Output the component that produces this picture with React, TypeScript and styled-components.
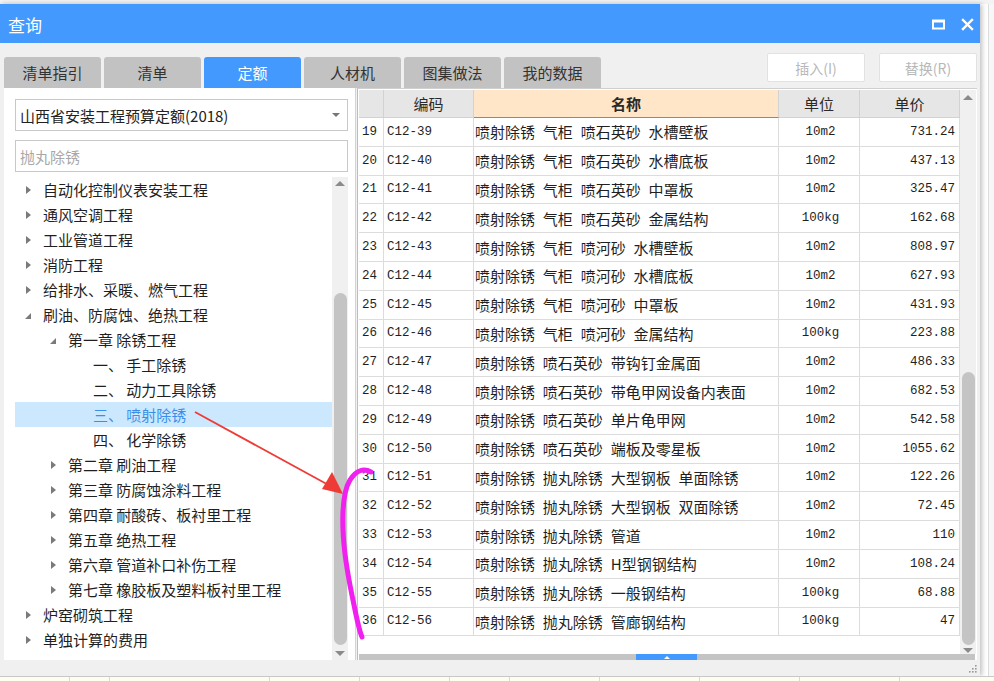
import React from 'react';
import styled, { createGlobalStyle } from 'styled-components';

const GlobalStyle = createGlobalStyle`
  html, body {
    margin: 0;
    padding: 0;
    background: #ffffff;
  }
  * {
    box-sizing: border-box;
  }
`;

const UI_FONT = `"Noto Sans CJK SC", "Noto Sans", sans-serif`;
const MONO_FONT = `"Liberation Mono", "Noto Sans CJK SC", monospace`;
const BLUE = '#4499ff';

const s = {
  Page: styled.div`
    position: relative;
    width: 994px;
    height: 681px;
    overflow: hidden;
    display: flex;
    flex-direction: column;
    background: #ffffff;
    font-family: ${UI_FONT};
  `,
  TopStrip: styled.div`
    height: 4px;
    background: #f3f3f3;
  `,
  Middle: styled.div`
    height: 672px;
    display: flex;
  `,
  RightStrip: styled.div`
    flex: 1;
    margin-left: 8px;
    background: #f7f7f7;
    border-left: 1px solid #dddddd;
  `,
  BottomStrip: styled.div`
    flex: 1;
    background: #fffdf0;
    border-top: 1px solid #c8c8c8;
    display: flex;
  `,
  BottomCell: styled.div<{ $w: number }>`
    width: ${(p) => p.$w}px;
    border-right: 1px solid #d8d8d8;
  `,
  Dialog: styled.div`
    width: 980px;
    height: 672px;
    display: flex;
    flex-direction: column;
    background: #f0f0f0;
    box-shadow: 2px 0 5px rgba(0, 0, 0, 0.25);
  `,
  TitleBar: styled.div`
    height: 39px;
    background: ${BLUE};
    display: flex;
    align-items: center;
    justify-content: space-between;
    padding: 0 6px 0 8px;
  `,
  Title: styled.div`
    color: #ffffff;
    font-size: 17px;
    line-height: 1;
    margin-top: 2px;
  `,
  TitleControls: styled.div`
    display: flex;
    align-items: center;
    gap: 16px;
    padding-top: 2px;
  `,
  TabRow: styled.div`
    height: 45px;
    display: flex;
    align-items: flex-end;
    padding: 0 3px 0 4px;
  `,
  Tabs: styled.div`
    display: flex;
    gap: 3px;
  `,
  Tab: styled.div<{ $active?: boolean }>`
    width: 97px;
    height: 31px;
    border-radius: 3px 3px 0 0;
    background: ${(p) => (p.$active ? BLUE : '#c2c2c2')};
    color: ${(p) => (p.$active ? '#ffffff' : '#333333')};
    font-size: 15px;
    display: flex;
    align-items: center;
    justify-content: center;
  `,
  Actions: styled.div`
    margin-left: auto;
    align-self: flex-start;
    margin-top: 10px;
    display: flex;
    gap: 14px;
  `,
  ActionBtn: styled.div`
    width: 98px;
    height: 29px;
    background: #ffffff;
    border: 1px solid #e2e2e2;
    border-radius: 2px;
    color: #b8b8b8;
    font-size: 14px;
    display: flex;
    align-items: center;
    justify-content: center;
  `,
  Content: styled.div`
    height: 572px;
    display: flex;
    gap: 1px;
    padding-left: 4px;
  `,
  LeftPanel: styled.div`
    width: 352px;
    background: #ffffff;
    border-right: 1px solid #d4d4d4;
    display: flex;
    flex-direction: column;
    padding: 11px 7px 0 11px;
  `,
  Select: styled.div`
    height: 32px;
    border: 1px solid #c8c8c8;
    display: flex;
    align-items: center;
    justify-content: space-between;
    padding: 0 7px 0 4px;
    font-size: 15px;
    color: #222222;
  `,
  SelectCaret: styled.span`
    width: 0;
    height: 0;
    border-left: 4px solid transparent;
    border-right: 4px solid transparent;
    border-top: 4px solid #777777;
  `,
  Search: styled.input`
    margin-top: 9px;
    height: 32px;
    border: 1px solid #c8c8c8;
    outline: none;
    padding: 0 4px;
    font-family: ${UI_FONT};
    font-size: 15px;
    color: #222222;
    &::placeholder {
      color: #a8a8a8;
    }
  `,
  TreeArea: styled.div`
    margin-top: 5px;
    flex: 1;
    display: flex;
    min-height: 0;
  `,
  TreeList: styled.div`
    flex: 1;
    display: flex;
    flex-direction: column;
  `,
  TreeRow: styled.div<{ $level: number; $selected?: boolean }>`
    height: 25px;
    flex-shrink: 0;
    display: flex;
    align-items: center;
    padding-left: ${(p) => 10 + p.$level * 25}px;
    background: ${(p) => (p.$selected ? '#cce8ff' : 'transparent')};
    color: ${(p) => (p.$selected ? '#3b8fe8' : '#1f1f1f')};
    font-size: 15px;
    white-space: pre;
  `,
  Toggle: styled.span`
    width: 18px;
    height: 25px;
    display: flex;
    align-items: center;
  `,
  Collapsed: styled.span`
    width: 0;
    height: 0;
    border-top: 4px solid transparent;
    border-bottom: 4px solid transparent;
    border-left: 5px solid #7a7a7a;
    margin-left: 1px;
  `,
  Expanded: styled.span`
    width: 0;
    height: 0;
    border-left: 6px solid transparent;
    border-bottom: 6px solid #7a7a7a;
    margin-top: 2px;
  `,
  VBar: styled.div<{ $w: number }>`
    width: ${(p) => p.$w}px;
    background: #f0f0f0;
    display: flex;
    flex-direction: column;
    align-items: center;
  `,
  ArrowBox: styled.div<{ $h: number }>`
    height: ${(p) => p.$h}px;
    flex-shrink: 0;
    display: flex;
    align-items: center;
    justify-content: center;
  `,
  ArrowUp: styled.span`
    width: 0;
    height: 0;
    border-left: 5px solid transparent;
    border-right: 5px solid transparent;
    border-bottom: 5px solid #8a8a8a;
  `,
  ArrowDown: styled.span`
    width: 0;
    height: 0;
    border-left: 5px solid transparent;
    border-right: 5px solid transparent;
    border-top: 5px solid #8a8a8a;
  `,
  Thumb: styled.div<{ $top: number; $h: number }>`
    width: 13px;
    margin-top: ${(p) => p.$top}px;
    height: ${(p) => p.$h}px;
    border-radius: 7px;
    background: #c4c4c4;
    flex-shrink: 0;
  `,
  Filler: styled.div`
    flex: 1;
  `,
  TablePanel: styled.div`
    width: 620px;
    background: #ffffff;
    border-top: 1px solid #cfcfcf;
    border-left: 1px solid #bdbdbd;
    padding: 1px 0 0 1px;
    display: flex;
    flex-direction: column;
  `,
  TableBody: styled.div`
    flex: 1;
    display: flex;
    min-height: 0;
  `,
  Grid: styled.div`
    width: 601px;
    display: flex;
    flex-direction: column;
  `,
  Row: styled.div<{ $h: number }>`
    display: grid;
    grid-template-columns: 25px 90px 305px 81px 100px;
    height: ${(p) => p.$h}px;
    flex-shrink: 0;
  `,
  HeadCell: styled.div<{ $name?: boolean }>`
    background: ${(p) => (p.$name ? '#ffe6c9' : '#e6e6e6')};
    border-right: 1px solid #d2d2d2;
    border-bottom: 1px solid ${(p) => (p.$name ? BLUE : '#d2d2d2')};
    display: flex;
    align-items: center;
    justify-content: center;
    font-size: 15px;
    font-weight: ${(p) => (p.$name ? 700 : 400)};
    color: #2a2a2a;
  `,
  Cell: styled.div<{ $align?: 'left' | 'center' | 'right'; $cjk?: boolean }>`
    border-right: 1px solid #dcdcdc;
    border-bottom: 1px solid #dcdcdc;
    display: flex;
    align-items: center;
    justify-content: ${(p) =>
      p.$align === 'center' ? 'center' : p.$align === 'right' ? 'flex-end' : 'flex-start'};
    padding: ${(p) => (p.$align === 'right' ? '0 4px 0 0' : p.$cjk ? '0 0 0 1px' : '0 0 0 3px')};
    font-family: ${(p) => (p.$cjk ? UI_FONT : MONO_FONT)};
    font-size: ${(p) => (p.$cjk ? '15px' : '12.5px')};
    word-spacing: ${(p) => (p.$cjk ? '4.5px' : '0')};
    color: #1f1f1f;
    white-space: pre;
    overflow: hidden;
  `,
  HBar: styled.div`
    height: 6px;
    margin-right: 2px;
    background: #c4c4c4;
    display: flex;
  `,
  HThumb: styled.div`
    margin-left: 277px;
    width: 61px;
    height: 6px;
    background: ${BLUE};
    display: flex;
    justify-content: center;
    align-items: center;
  `,
  HThumbArrow: styled.span`
    width: 0;
    height: 0;
    border-left: 3px solid transparent;
    border-right: 3px solid transparent;
    border-bottom: 3px solid #ffffff;
  `,
  Footer: styled.div`
    height: 16px;
    display: flex;
    justify-content: flex-end;
    align-items: flex-end;
    padding: 0 2px 2px 0;
  `,
  Overlay: styled.svg`
    position: absolute;
    left: 0;
    top: 0;
    pointer-events: none;
  `,
};

type TreeNode = { label: string; level: number; state: 'open' | 'closed' | 'leaf'; selected?: boolean };

const treeNodes: TreeNode[] = [
  { label: '自动化控制仪表安装工程', level: 0, state: 'closed' },
  { label: '通风空调工程', level: 0, state: 'closed' },
  { label: '工业管道工程', level: 0, state: 'closed' },
  { label: '消防工程', level: 0, state: 'closed' },
  { label: '给排水、采暖、燃气工程', level: 0, state: 'closed' },
  { label: '刷油、防腐蚀、绝热工程', level: 0, state: 'open' },
  { label: '第一章 除锈工程', level: 1, state: 'open' },
  { label: '一、 手工除锈', level: 2, state: 'leaf' },
  { label: '二、 动力工具除锈', level: 2, state: 'leaf' },
  { label: '三、 喷射除锈', level: 2, state: 'leaf', selected: true },
  { label: '四、 化学除锈', level: 2, state: 'leaf' },
  { label: '第二章 刷油工程', level: 1, state: 'closed' },
  { label: '第三章 防腐蚀涂料工程', level: 1, state: 'closed' },
  { label: '第四章 耐酸砖、板衬里工程', level: 1, state: 'closed' },
  { label: '第五章 绝热工程', level: 1, state: 'closed' },
  { label: '第六章 管道补口补伤工程', level: 1, state: 'closed' },
  { label: '第七章 橡胶板及塑料板衬里工程', level: 1, state: 'closed' },
  { label: '炉窑砌筑工程', level: 0, state: 'closed' },
  { label: '单独计算的费用', level: 0, state: 'closed' },
];

const quotaRows: [number, string, string, string, string][] = [
  [19, 'C12-39', '喷射除锈 气柜 喷石英砂 水槽壁板', '10m2', '731.24'],
  [20, 'C12-40', '喷射除锈 气柜 喷石英砂 水槽底板', '10m2', '437.13'],
  [21, 'C12-41', '喷射除锈 气柜 喷石英砂 中罩板', '10m2', '325.47'],
  [22, 'C12-42', '喷射除锈 气柜 喷石英砂 金属结构', '100kg', '162.68'],
  [23, 'C12-43', '喷射除锈 气柜 喷河砂 水槽壁板', '10m2', '808.97'],
  [24, 'C12-44', '喷射除锈 气柜 喷河砂 水槽底板', '10m2', '627.93'],
  [25, 'C12-45', '喷射除锈 气柜 喷河砂 中罩板', '10m2', '431.93'],
  [26, 'C12-46', '喷射除锈 气柜 喷河砂 金属结构', '100kg', '223.88'],
  [27, 'C12-47', '喷射除锈 喷石英砂 带钩钉金属面', '10m2', '486.33'],
  [28, 'C12-48', '喷射除锈 喷石英砂 带龟甲网设备内表面', '10m2', '682.53'],
  [29, 'C12-49', '喷射除锈 喷石英砂 单片龟甲网', '10m2', '542.58'],
  [30, 'C12-50', '喷射除锈 喷石英砂 端板及零星板', '10m2', '1055.62'],
  [31, 'C12-51', '喷射除锈 抛丸除锈 大型钢板 单面除锈', '10m2', '122.26'],
  [32, 'C12-52', '喷射除锈 抛丸除锈 大型钢板 双面除锈', '10m2', '72.45'],
  [33, 'C12-53', '喷射除锈 抛丸除锈 管道', '10m2', '110'],
  [34, 'C12-54', '喷射除锈 抛丸除锈 H型钢钢结构', '10m2', '108.24'],
  [35, 'C12-55', '喷射除锈 抛丸除锈 一般钢结构', '100kg', '68.88'],
  [36, 'C12-56', '喷射除锈 抛丸除锈 管廊钢结构', '100kg', '47'],
];

const tabs = ['清单指引', '清单', '定额', '人材机', '图集做法', '我的数据'];

const MaximizeIcon = () => (
  <svg width="13" height="11" viewBox="0 0 13 11">
    <rect x="1" y="1.5" width="11" height="8" fill="none" stroke="#fff" strokeWidth="2" />
    <rect x="1" y="1" width="11" height="2.5" fill="#fff" />
  </svg>
);

const CloseIcon = () => (
  <svg width="13" height="13" viewBox="0 0 13 13">
    <path d="M2 2 L11 11 M11 2 L2 11" stroke="#fff" strokeWidth="2.4" strokeLinecap="square" />
  </svg>
);

const ResizeGrip = () => (
  <svg width="10" height="10" viewBox="0 0 10 10">
    {[
      [8, 2],
      [5, 5],
      [8, 5],
      [2, 8],
      [5, 8],
      [8, 8],
    ].map(([x, y], i) => (
      <rect key={i} x={x - 1} y={y - 1} width="1.6" height="1.6" fill="#9a9a9a" />
    ))}
  </svg>
);

const Annotations = () => (
  <s.Overlay width="994" height="681" viewBox="0 0 994 681">
    <line x1="195" y1="412" x2="334" y2="488" stroke="#ef3b36" strokeWidth="1.8" />
    <polygon points="343,494 322,489 332,472" fill="#ef3b36" />
    <path
      d="M371 472 C364 468 356 470 350 480 C344 490 342 505 343 530 C344 560 350 585 354 605 C357 620 359 630 362 637"
      fill="none"
      stroke="#f020ee"
      strokeWidth="5"
      strokeLinecap="round"
      strokeLinejoin="round"
    />
  </s.Overlay>
);

const App = (): JSX.Element => {
  return (
    <s.Page>
      <GlobalStyle />
      <s.TopStrip />
      <s.Middle>
        <s.Dialog>
          <s.TitleBar>
            <s.Title children="查询" />
            <s.TitleControls>
              <MaximizeIcon />
              <CloseIcon />
            </s.TitleControls>
          </s.TitleBar>

          <s.TabRow>
            <s.Tabs>
              {tabs.map((t) => (
                <s.Tab key={t} $active={t === '定额'} children={t} />
              ))}
            </s.Tabs>
            <s.Actions>
              <s.ActionBtn children="插入(I)" />
              <s.ActionBtn children="替换(R)" />
            </s.Actions>
          </s.TabRow>

          <s.Content>
            <s.LeftPanel>
              <s.Select>
                <span>山西省安装工程预算定额(2018)</span>
                <s.SelectCaret />
              </s.Select>
              <s.Search placeholder="抛丸除锈" />
              <s.TreeArea>
                <s.TreeList>
                  {treeNodes.map((n, i) => (
                    <s.TreeRow key={i} $level={n.level} $selected={n.selected}>
                      <s.Toggle>
                        {n.state === 'closed' && <s.Collapsed />}
                        {n.state === 'open' && <s.Expanded />}
                      </s.Toggle>
                      {n.label}
                    </s.TreeRow>
                  ))}
                </s.TreeList>
                <s.VBar $w={16}>
                  <s.ArrowBox $h={13}>
                    <s.ArrowUp />
                  </s.ArrowBox>
                  <s.Thumb $top={103} $h={352} />
                  <s.Filler />
                  <s.ArrowBox $h={14}>
                    <s.ArrowDown />
                  </s.ArrowBox>
                </s.VBar>
              </s.TreeArea>
            </s.LeftPanel>

            <s.TablePanel>
              <s.TableBody>
                <s.Grid>
                  <s.Row $h={28}>
                    <s.HeadCell />
                    <s.HeadCell children="编码" />
                    <s.HeadCell $name children="名称" />
                    <s.HeadCell children="单位" />
                    <s.HeadCell children="单价" />
                  </s.Row>
                  {quotaRows.map(([no, code, name, unit, price]) => (
                    <s.Row key={no} $h={28.8}>
                      <s.Cell children={String(no)} />
                      <s.Cell children={code} />
                      <s.Cell $cjk children={name} />
                      <s.Cell $align="center" children={unit} />
                      <s.Cell $align="right" children={price} />
                    </s.Row>
                  ))}
                </s.Grid>
                <s.VBar $w={16}>
                  <s.ArrowBox $h={14}>
                    <s.ArrowUp />
                  </s.ArrowBox>
                  <s.Thumb $top={268} $h={273} />
                  <s.Filler />
                  <s.ArrowBox $h={10}>
                    <s.ArrowDown />
                  </s.ArrowBox>
                </s.VBar>
              </s.TableBody>
              <s.HBar>
                <s.HThumb>
                  <s.HThumbArrow />
                </s.HThumb>
              </s.HBar>
            </s.TablePanel>
          </s.Content>

          <s.Footer>
            <ResizeGrip />
          </s.Footer>
        </s.Dialog>
        <s.RightStrip />
      </s.Middle>
      <s.BottomStrip>
        {[70, 40, 160, 90, 90, 60, 90, 100, 100, 100].map((w, i) => (
          <s.BottomCell key={i} $w={w} />
        ))}
      </s.BottomStrip>
      <Annotations />
    </s.Page>
  );
};

export default App;
